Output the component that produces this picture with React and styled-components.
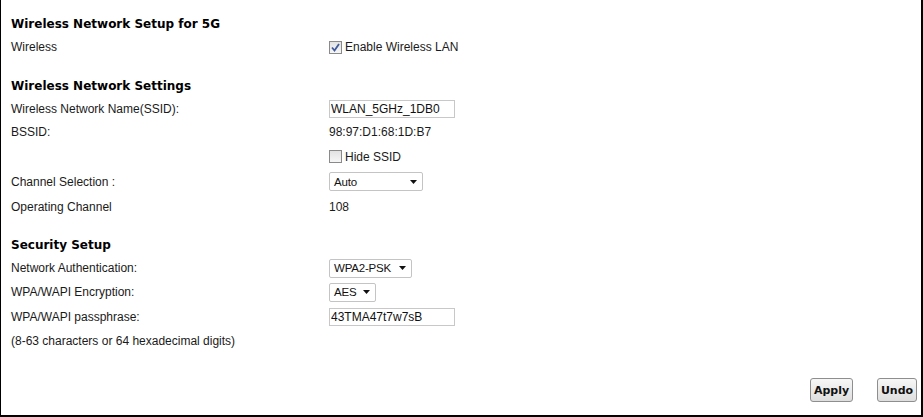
import styled, { createGlobalStyle } from "styled-components";

const GlobalStyle = createGlobalStyle`
  html, body {
    margin: 0;
    padding: 0;
    background: #fff;
  }
  body {
    font-family: "Liberation Sans", Arial, sans-serif;
    font-size: 12px;
    color: #1a1a1a;
  }
`;

function App() {
  return (
    <>
      <GlobalStyle />
      <Frame>
        <Title>Wireless Network Setup for 5G</Title>
        <Row h={22}>
          <Label>Wireless</Label>
          <Value>
            <Check checked />
            <CheckText>Enable Wireless LAN</CheckText>
          </Value>
        </Row>

        <Title gap={16}>Wireless Network Settings</Title>
        <Row h={22}>
          <Label>Wireless Network Name(SSID):</Label>
          <Value>
            <TextInput readOnly value="WLAN_5GHz_1DB0" />
          </Value>
        </Row>
        <Row h={24}>
          <Label>BSSID:</Label>
          <Value>98:97:D1:68:1D:B7</Value>
        </Row>
        <Row h={25}>
          <Label />
          <Value>
            <Check />
            <CheckText>Hide SSID</CheckText>
          </Value>
        </Row>
        <Row h={25}>
          <Label>Channel Selection :</Label>
          <Value>
            <Select w={94} value="Auto" />
          </Value>
        </Row>
        <Row h={25}>
          <Label>Operating Channel</Label>
          <Value>108</Value>
        </Row>

        <Title gap={14}>Security Setup</Title>
        <Row h={22}>
          <Label>Network Authentication:</Label>
          <Value>
            <Select w={83} value="WPA2-PSK" />
          </Value>
        </Row>
        <Row h={26}>
          <Label>WPA/WAPI Encryption:</Label>
          <Value>
            <Select w={47} value="AES" />
          </Value>
        </Row>
        <Row h={24}>
          <Label>WPA/WAPI passphrase:</Label>
          <Value>
            <TextInput readOnly value="43TMA47t7w7sB" />
          </Value>
        </Row>
        <Row h={24}>
          <Label wide>(8-63 characters or 64 hexadecimal digits)</Label>
        </Row>

        <Footer>
          <Button w={43}>Apply</Button>
          <Button w={40}>Undo</Button>
        </Footer>
      </Frame>
    </>
  );
}

function Check({ checked }) {
  return (
    <Box>
      {checked && (
        <svg width="9" height="9" viewBox="0 0 9 9">
          <path
            d="M1 4.5 L3.5 7.5 L8 1"
            fill="none"
            stroke="#3f5a9c"
            strokeWidth="1.8"
          />
        </svg>
      )}
    </Box>
  );
}

function Select({ w, value }) {
  return (
    <SelectBox style={{ width: w }}>
      <span>{value}</span>
      <svg width="7" height="4" viewBox="0 0 7 4">
        <path d="M0 0 H7 L3.5 4 Z" fill="#111" />
      </svg>
    </SelectBox>
  );
}

export default App;

const Frame = styled.div`
  box-sizing: border-box;
  width: 923px;
  height: 417px;
  border-left: 1px solid #000;
  border-right: 2px solid #000;
  border-bottom: 2px solid #000;
  padding: 12px 4px 0 10px;
  display: flex;
  flex-direction: column;
`;

const Title = styled.h2`
  margin: ${(p) => p.gap || 0}px 0 0;
  height: 24px;
  display: flex;
  align-items: center;
  font-family: "DejaVu Sans", Verdana, sans-serif;
  font-weight: bold;
  font-size: 12px;
  color: #000;
`;

const Row = styled.div`
  height: ${(p) => p.h}px;
  display: flex;
  align-items: center;
`;

const Label = styled.div`
  width: ${(p) => (p.wide ? "auto" : "318px")};
  flex-shrink: 0;
  white-space: nowrap;
`;

const Value = styled.div`
  display: flex;
  align-items: center;
`;

const Box = styled.span`
  box-sizing: border-box;
  width: 13px;
  height: 13px;
  border: 1px solid #8a8a8a;
  background: linear-gradient(#e2e2e2, #f6f6f6);
  display: flex;
  align-items: center;
  justify-content: center;
`;

const CheckText = styled.span`
  margin-left: 3px;
`;

const TextInput = styled.input`
  box-sizing: border-box;
  width: 126px;
  height: 18px;
  margin: 0;
  padding: 0 1px;
  border: 1px solid #c8c8c8;
  font-family: "Liberation Sans", Arial, sans-serif;
  font-size: 12px;
  color: #111;
  outline: none;
`;

const SelectBox = styled.div`
  box-sizing: border-box;
  height: 19px;
  padding: 0 5px 0 4px;
  border: 1px solid #c4c4c4;
  border-radius: 2px;
  background: #fff;
  display: flex;
  align-items: center;
  justify-content: space-between;
  font-size: 11.5px;
  letter-spacing: -0.2px;
  color: #111;
`;

const Footer = styled.div`
  margin-top: 25px;
  display: flex;
  justify-content: flex-end;
  gap: 24px;
`;

const Button = styled.button`
  box-sizing: border-box;
  width: ${(p) => p.w}px;
  height: 24px;
  margin: 0;
  padding: 0;
  border: 1px solid #8e8e8e;
  border-radius: 3px;
  background: linear-gradient(#f7f7f7, #dedede);
  font-family: "DejaVu Sans", Verdana, sans-serif;
  font-weight: bold;
  font-size: 11px;
  color: #111;
`;
